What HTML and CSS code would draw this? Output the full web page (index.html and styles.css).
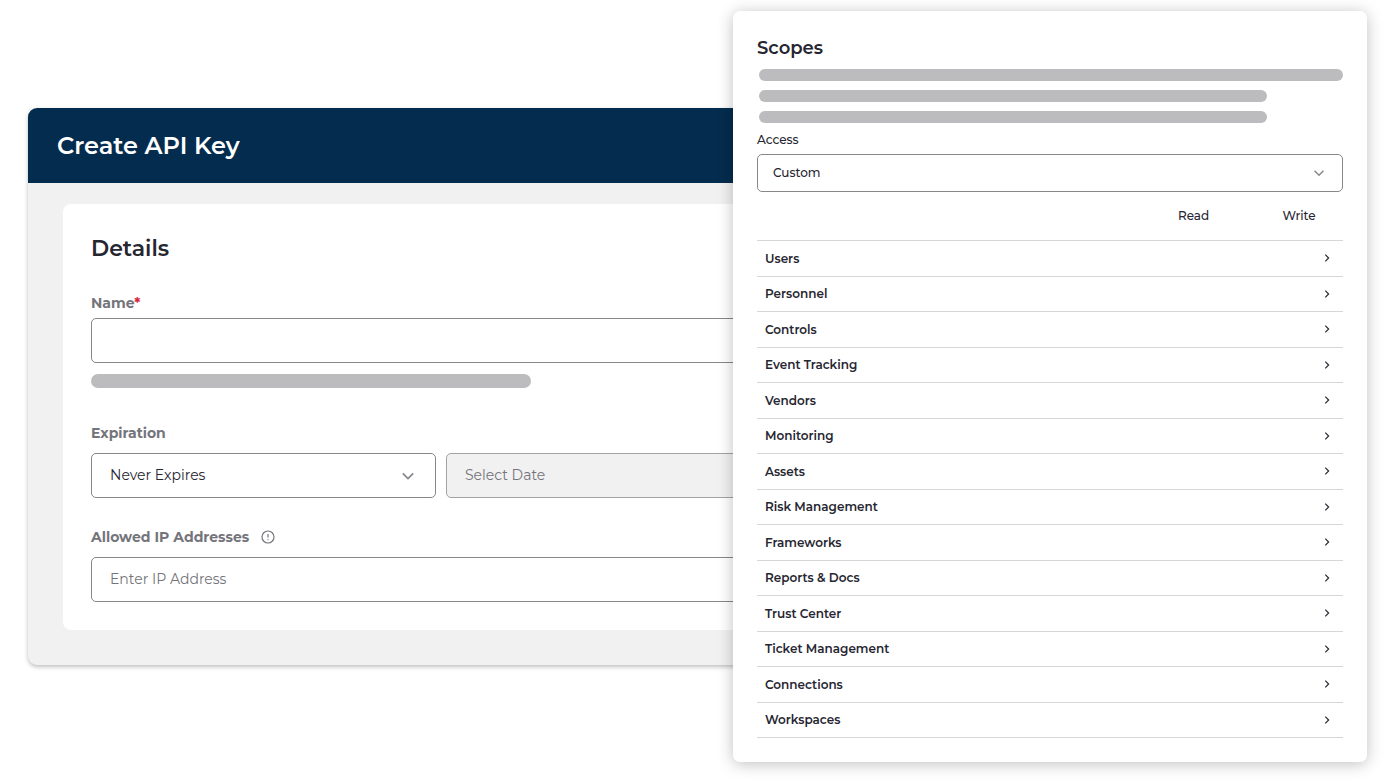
FILE: index.html
```html
<!DOCTYPE html>
<html lang="en">
<head>
<meta charset="utf-8">
<meta name="viewport" content="width=device-width, initial-scale=1">
<title>Create API Key</title>
<link rel="stylesheet" href="styles.css">
</head>
<body>
<svg class="sprite" aria-hidden="true">
  <symbol id="chevron-down" viewBox="0 0 14 14"><path d="M1.8 4.3 7 9.5 12.2 4.3"/></symbol>
  <symbol id="chevron-right" viewBox="0 0 10 10"><path d="M3.3 1.7 6.6 5 3.3 8.3"/></symbol>
</svg>
<main class="stage">
  <form class="key-form">
    <header class="form-header"><h1 class="form-title">Create API Key</h1></header>
    <div class="form-body">
      <section class="card">
        <h2 class="card-title">Details</h2>
        <label class="label label-tight" for="name">Name<span class="required">*</span></label>
        <input class="control" id="name" type="text" required>
        <div class="bar bar-hint"></div>
        <label class="label" for="expiration">Expiration</label>
        <div class="split">
          <div class="select-wrap">
            <select class="control select" id="expiration"><option>Never Expires</option></select>
            <svg class="select-icon" aria-hidden="true"><use href="#chevron-down"/></svg>
          </div>
          <input class="control" type="text" placeholder="Select Date" aria-label="Expiration date" disabled>
        </div>
        <div class="label-row">
          <label class="label" for="ip">Allowed IP Addresses</label>
          <svg class="info" viewBox="0 0 14 14" aria-hidden="true"><circle cx="7" cy="7" r="6"/><path d="M7 4V7.5M7 9.2V10.2"/></svg>
        </div>
        <input class="control" id="ip" type="text" placeholder="Enter IP Address">
      </section>
    </div>
  </form>

  <section class="scopes">
    <h2 class="scopes-title">Scopes</h2>
    <div class="bars">
      <div class="bar"></div>
      <div class="bar bar-short"></div>
      <div class="bar bar-short"></div>
    </div>
    <label class="access-label" for="access">Access</label>
    <div class="select-wrap">
      <select class="control select compact" id="access"><option>Custom</option></select>
      <svg class="select-icon small" aria-hidden="true"><use href="#chevron-down"/></svg>
    </div>
    <table class="scope-table">
      <thead><tr><td></td><th class="col col-read" scope="col">Read</th><th class="col col-write" scope="col">Write</th></tr></thead>
      <tbody>
        <tr><th scope="row" colspan="2">Users</th><td><button class="expand" type="button" aria-label="Expand Users"><svg><use href="#chevron-right"/></svg></button></td></tr>
        <tr><th scope="row" colspan="2">Personnel</th><td><button class="expand" type="button" aria-label="Expand Personnel"><svg><use href="#chevron-right"/></svg></button></td></tr>
        <tr><th scope="row" colspan="2">Controls</th><td><button class="expand" type="button" aria-label="Expand Controls"><svg><use href="#chevron-right"/></svg></button></td></tr>
        <tr><th scope="row" colspan="2">Event Tracking</th><td><button class="expand" type="button" aria-label="Expand Event Tracking"><svg><use href="#chevron-right"/></svg></button></td></tr>
        <tr><th scope="row" colspan="2">Vendors</th><td><button class="expand" type="button" aria-label="Expand Vendors"><svg><use href="#chevron-right"/></svg></button></td></tr>
        <tr><th scope="row" colspan="2">Monitoring</th><td><button class="expand" type="button" aria-label="Expand Monitoring"><svg><use href="#chevron-right"/></svg></button></td></tr>
        <tr><th scope="row" colspan="2">Assets</th><td><button class="expand" type="button" aria-label="Expand Assets"><svg><use href="#chevron-right"/></svg></button></td></tr>
        <tr><th scope="row" colspan="2">Risk Management</th><td><button class="expand" type="button" aria-label="Expand Risk Management"><svg><use href="#chevron-right"/></svg></button></td></tr>
        <tr><th scope="row" colspan="2">Frameworks</th><td><button class="expand" type="button" aria-label="Expand Frameworks"><svg><use href="#chevron-right"/></svg></button></td></tr>
        <tr><th scope="row" colspan="2">Reports &amp; Docs</th><td><button class="expand" type="button" aria-label="Expand Reports &amp; Docs"><svg><use href="#chevron-right"/></svg></button></td></tr>
        <tr><th scope="row" colspan="2">Trust Center</th><td><button class="expand" type="button" aria-label="Expand Trust Center"><svg><use href="#chevron-right"/></svg></button></td></tr>
        <tr><th scope="row" colspan="2">Ticket Management</th><td><button class="expand" type="button" aria-label="Expand Ticket Management"><svg><use href="#chevron-right"/></svg></button></td></tr>
        <tr><th scope="row" colspan="2">Connections</th><td><button class="expand" type="button" aria-label="Expand Connections"><svg><use href="#chevron-right"/></svg></button></td></tr>
        <tr><th scope="row" colspan="2">Workspaces</th><td><button class="expand" type="button" aria-label="Expand Workspaces"><svg><use href="#chevron-right"/></svg></button></td></tr>
      </tbody>
    </table>
  </section>
</main>
</body>
</html>
```
FILE: styles.css
```css
* { box-sizing: border-box; }
body {
  margin: 0;
  background: #fff;
  color: #262631;
  font-family: Montserrat, Inter, sans-serif;
}
h1, h2 { margin: 0; }
.sprite { display: none; }
.stage {
  display: grid;
  grid-template-columns: 705fr 634fr;
  align-items: start;
  padding: 11px 26px 21px 28px;
}

/* Form, tucked under the scopes panel on its right side */
.key-form {
  margin: 97px -86px 0 0;
  min-width: 0;
  border-radius: 9px;
  overflow: hidden;
  background: #f1f1f1;
  box-shadow: 0 2px 4px rgba(0, 0, 0, .25);
}
.form-header {
  padding: 22px 29px;
  background: #042c4e;
  color: #fff;
}
.form-title { font-size: 24px; font-weight: 600; line-height: 31px; }
.form-body { padding: 21px 0 35px 35px; }
.card {
  padding: 28px;
  border-radius: 8px;
  background: #fff;
}
.card-title { margin-bottom: 27px; font-size: 22px; font-weight: 600; line-height: 34px; }
.label {
  display: block;
  margin-bottom: 10px;
  color: #74747b;
  font-size: 14px;
  font-weight: 700;
  line-height: 20px;
}
.label-tight { margin-bottom: 5px; }
.required { color: #dc2438; }
.control {
  display: block;
  width: 100%;
  height: 45px;
  margin: 0;
  padding: 0 18px 2px;
  border: 1px solid #86868b;
  border-radius: 5px;
  background: #fff;
  color: #262631;
  font-family: inherit;
  font-size: 14px;
}
.control::placeholder { color: #74747b; opacity: 1; }
.control:disabled { border-color: #a3a3a7; background: #f1f1f1; }
.bar { height: 12px; border-radius: 6px; background: #bcbcbe; }
.bar-hint { width: 440px; max-width: 100%; height: 14px; margin: 11px 0 35px; border-radius: 7px; }
.split {
  display: grid;
  grid-template-columns: 1fr 1fr;
  gap: 10px;
  margin-bottom: 29px;
}
.select-wrap { display: grid; align-items: center; }
.select-wrap > * { grid-area: 1 / 1; }
.select { appearance: none; }
.select-icon {
  justify-self: end;
  width: 14px;
  height: 14px;
  margin-right: 21px;
  fill: none;
  stroke: #86868b;
  stroke-width: 1.7;
  pointer-events: none;
}
.label-row { display: flex; gap: 12px; }
.info { width: 14px; height: 14px; margin-top: 3px; fill: none; stroke: #74747b; stroke-width: 1.2; }

/* Scopes panel */
.scopes {
  z-index: 1;
  min-width: 0;
  padding: 24px;
  border-radius: 7px;
  background: #fff;
  box-shadow: 0 2px 16px rgba(0, 0, 0, .25);
}
.scopes-title { font-size: 18px; font-weight: 600; line-height: 26px; }
.bars { display: grid; gap: 9px; margin: 8px 0 8px 2px; }
.bar-short { width: 87%; }
.access-label { display: block; margin-bottom: 5px; font-size: 12px; font-weight: 500; line-height: 18px; }
.compact { height: 38px; padding: 0 15px 2px; font-size: 12px; font-weight: 500; }
.select-icon.small { width: 12px; height: 12px; margin-right: 18px; }
.scope-table {
  width: 100%;
  border-collapse: collapse;
  table-layout: fixed;
  font-size: 12px;
}
.scope-table th, .scope-table td { padding: 0 8px; text-align: left; }
.scope-table .col { padding: 0; font-weight: 500; text-align: center; }
.col-read { width: 21%; }
.col-write { width: 15%; }
.scope-table thead tr { height: 48px; }
.scope-table tr { height: 36px; border-bottom: 1px solid #d6d6d8; }
.scope-table tbody tr:nth-child(even) { height: 35px; }
.scope-table tbody th { font-weight: 600; }
.expand {
  display: flex;
  margin-left: auto;
  padding: 3px;
  border: 0;
  background: none;
  color: #262631;
}
.expand svg { width: 10px; height: 10px; fill: none; stroke: currentColor; stroke-width: 1.2; }
```
